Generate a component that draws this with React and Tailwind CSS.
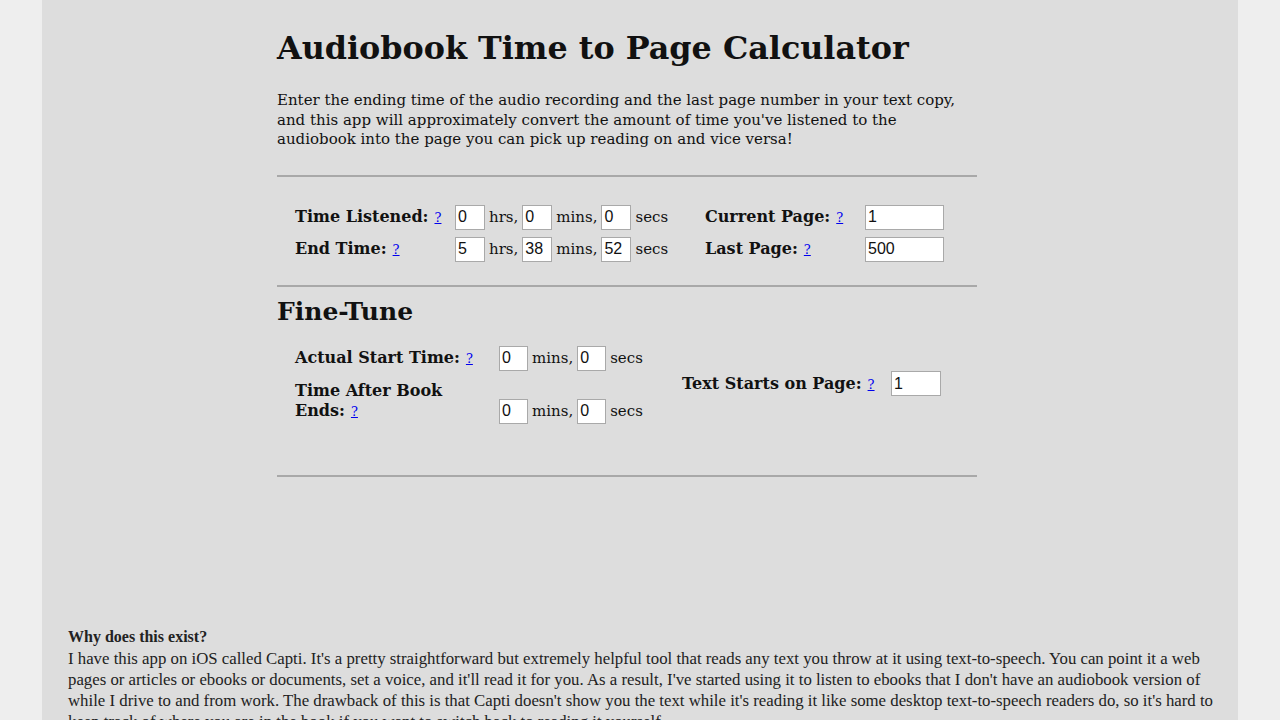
const Help = () => (
    <a href="#" className="text-[13px] text-[#0000ee] underline font-normal ml-[6px]">
        ?
    </a>
);

const Box = ({ value, w = "w-[30px]" }) => (
    <input
        type="text"
        defaultValue={value}
        className={`${w} h-[25px] bg-white border border-[#a9a9a9] px-[2px] text-[16px] text-[#111] outline-none font-['Liberation_Sans',sans-serif]`}
    />
);

const App = () => {
    return (
        <div className="min-h-screen bg-[#eeeeee] px-[42px] font-['DejaVu_Serif',serif] text-[#111]">
            <div className="bg-[#dddddd] min-h-[720px] pt-[27px]">
                <div className="w-[700px] ml-[235px]">
                    <h1 className="text-[31.8px] font-bold leading-[42px]">Audiobook Time to Page Calculator</h1>
                    <p className="mt-[22px] w-[690px] text-[15px] leading-[19.5px]">
                        Enter the ending time of the audio recording and the last page number in your text copy, and
                        this app will approximately convert the amount of time you've listened to the audiobook into
                        the page you can pick up reading on and vice versa!
                    </p>
                    <hr className="mt-[25px] border-0 border-t-2 border-[#a8a8a8]" />

                    <div className="mt-[28px] pl-[18px] grid grid-cols-[160px_250px_160px_80px] gap-y-[7px] items-center text-[15px]">
                        <div className="font-bold text-[16px]">
                            Time Listened:<Help />
                        </div>
                        <div className="flex items-center gap-[4px]">
                            <Box value="0" />
                            <span>hrs,</span>
                            <Box value="0" />
                            <span>mins,</span>
                            <Box value="0" />
                            <span>secs</span>
                        </div>
                        <div className="font-bold text-[16px]">
                            Current Page:<Help />
                        </div>
                        <Box value="1" w="w-[79px]" />

                        <div className="font-bold text-[16px]">
                            End Time:<Help />
                        </div>
                        <div className="flex items-center gap-[4px]">
                            <Box value="5" />
                            <span>hrs,</span>
                            <Box value="38" />
                            <span>mins,</span>
                            <Box value="52" />
                            <span>secs</span>
                        </div>
                        <div className="font-bold text-[16px]">
                            Last Page:<Help />
                        </div>
                        <Box value="500" w="w-[79px]" />
                    </div>

                    <hr className="mt-[23px] border-0 border-t-2 border-[#a8a8a8]" />

                    <h2 className="mt-[8px] text-[25px] font-bold leading-[34px]">Fine-Tune</h2>

                    <div className="mt-[17px] pl-[18px] flex items-center">
                        <div className="w-[370px] flex flex-col gap-[10px] text-[15px]">
                            <div className="flex items-center">
                                <div className="w-[204px] font-bold text-[16px]">
                                    Actual Start Time:<Help />
                                </div>
                                <div className="flex items-center gap-[4px]">
                                    <Box value="0" w="w-[29px]" />
                                    <span>mins,</span>
                                    <Box value="0" w="w-[29px]" />
                                    <span>secs</span>
                                </div>
                            </div>
                            <div className="flex items-end">
                                <div className="w-[204px] pr-[40px] font-bold text-[16px] leading-[20px]">
                                    Time After Book Ends:<Help />
                                </div>
                                <div className="flex items-center gap-[4px] -mb-[2px]">
                                    <Box value="0" w="w-[29px]" />
                                    <span>mins,</span>
                                    <Box value="0" w="w-[29px]" />
                                    <span>secs</span>
                                </div>
                            </div>
                        </div>
                        <div className="ml-[17px] flex items-center text-[16px]">
                            <div className="w-[209px] font-bold">
                                Text Starts on Page:<Help />
                            </div>
                            <Box value="1" w="w-[50px]" />
                        </div>
                    </div>

                    <hr className="mt-[53px] border-0 border-t-2 border-[#a8a8a8]" />
                </div>

                <div className="mt-[149px] pl-[26px] pr-[20px] font-['Liberation_Serif',serif] text-[16.8px] text-[#222]">
                    <div className="font-bold text-[16px] leading-[22px]">Why does this exist?</div>
                    <p className="leading-[21px]">
                        I have this app on iOS called Capti. It's a pretty straightforward but extremely helpful tool
                        that reads any text you throw at it using text-to-speech. You can point it a web pages or
                        articles or ebooks or documents, set a voice, and it'll read it for you. As a result, I've
                        started using it to listen to ebooks that I don't have an audiobook version of while I drive to
                        and from work. The drawback of this is that Capti doesn't show you the text while it's reading
                        it like some desktop text-to-speech readers do, so it's hard to keep track of where you are in
                        the book if you want to switch back to reading it yourself.
                    </p>
                </div>
            </div>
        </div>
    );
};

export default App;
